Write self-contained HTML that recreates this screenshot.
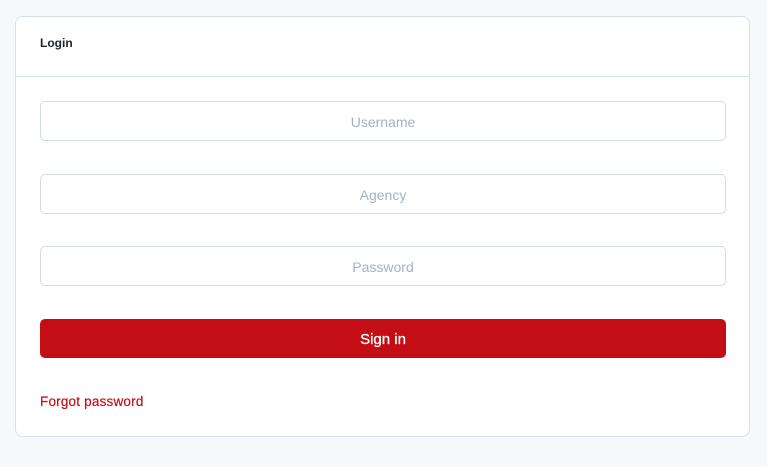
<!DOCTYPE html><html><head><style>
body{margin:0;width:767px;height:467px;background:#f6f8fc;font-family:"Liberation Sans",sans-serif;position:relative;overflow:hidden}
.card{position:absolute;left:15px;top:16px;width:733px;height:419px;background:#fff;border:1px solid #d5deed;border-radius:8px}
.hd{border-bottom:1px solid #d5deed;box-sizing:border-box;height:60px}
.hd span{position:absolute;left:24px;top:19px;font-size:12px;font-weight:bold;color:#1b2233}
.in{position:absolute;left:24px;width:684px;height:38px;border:1px solid #d3dbe8;border-radius:5px;text-align:center;line-height:40px;font-size:14px;color:#a5b1c8}
.btn{position:absolute;left:24px;top:302px;width:686px;height:39px;background:#c40e15;border-radius:5px;color:#fff;text-align:center;line-height:41px;font-size:15px;-webkit-text-stroke:0.3px #fff}
.fp{position:absolute;left:24px;top:377px;font-size:13.5px;color:#c40e15;letter-spacing:0.2px;-webkit-text-stroke:0.2px #c40e15}
</style></head><body>
<div class="card">
<div class="hd"><span>Login</span></div>
<div class="in" style="top:84px">Username</div>
<div class="in" style="top:157px">Agency</div>
<div class="in" style="top:229px">Password</div>
<div class="btn">Sign in</div>
<div class="fp">Forgot password</div>
</div>
</body></html>
